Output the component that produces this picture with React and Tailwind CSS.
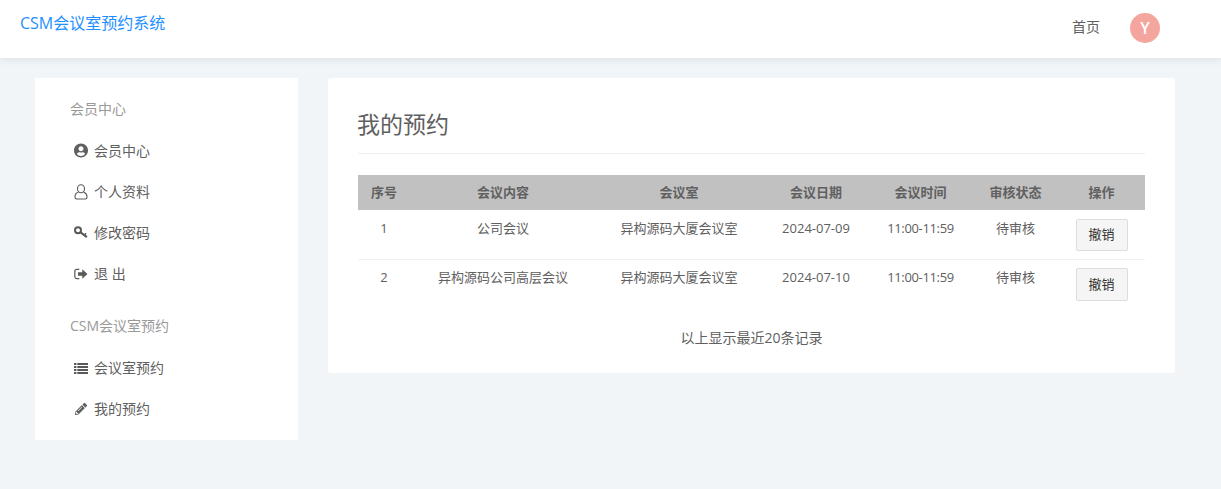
import React from "react";
import { FaUserCircle, FaPencilAlt } from "react-icons/fa";

const font = "font-['Open_Sans','Noto_Sans_CJK_SC',sans-serif]";

function LogoutIcon() {
  return (
    <svg viewBox="0 0 16 14" className="w-[14px] h-[12px] text-[#595959]" fill="currentColor">
      <path d="M6 1.500H3A2.200 2.200 0 0 0 .8 3.700v6.600A2.200 2.200 0 0 0 3 12.500h3" fill="none" stroke="currentColor" strokeWidth="1.400" />
      <path d="M4.500 5h5V1.600L15.500 7l-6 5.400V9h-5z" />
    </svg>
  );
}

function KeyIcon() {
  return (
    <svg viewBox="0 0 14 14" className="w-[15px] h-[15px] text-[#595959]" fill="none" stroke="currentColor">
      <circle cx="4" cy="4.800" r="3" strokeWidth="2" />
      <path d="M6.300 6.600l6.600 5" strokeWidth="2" />
      <path d="M10.300 9.700l1.700-1.900" strokeWidth="1.600" />
    </svg>
  );
}

function UserOutlineIcon() {
  return (
    <svg viewBox="0 0 14 16" className="w-[14px] h-[16px] text-[#595959]" fill="none" stroke="currentColor" strokeWidth="1.100">
      <ellipse cx="7" cy="4.700" rx="3.500" ry="4" />
      <path d="M4.300 8.300C2.300 9 1 10.500 1 12.500V13.300Q1 15 2.800 15H11.200Q13 15 13 13.300V12.500C13 10.500 11.700 9 9.700 8.300" />
    </svg>
  );
}

function ListIcon() {
  return (
    <svg viewBox="0 0 14 12" className="w-[14px] h-[12px] text-[#595959]" fill="currentColor">
      <rect x="0" y="1" width="2.400" height="2" />
      <rect x="3.300" y="1" width="10.700" height="2" />
      <rect x="0" y="4" width="2.400" height="2" />
      <rect x="3.300" y="4" width="10.700" height="2" />
      <rect x="0" y="7" width="2.400" height="2" />
      <rect x="3.300" y="7" width="10.700" height="2" />
      <rect x="0" y="10" width="2.400" height="2" />
      <rect x="3.300" y="10" width="10.700" height="2" />
    </svg>
  );
}

function SideItem({ icon, children }) {
  return (
    <a className="flex items-center h-[41px] pl-[39px] text-[14px] text-[#606060] gap-[6px]">
      <span className="w-[14px] flex items-center justify-center shrink-0">{icon}</span>
      <span>{children}</span>
    </a>
  );
}

const rows = [
  ["1", "公司会议", "异构源码大厦会议室", "2024-07-09", "11:00-11:59", "待审核"],
  ["2", "异构源码公司高层会议", "异构源码大厦会议室", "2024-07-10", "11:00-11:59", "待审核"],
];

const headers = [
  ["序号", "w-[52px]"],
  ["会议内容", "w-[186px]"],
  ["会议室", "w-[166px]"],
  ["会议日期", "w-[108px]"],
  ["会议时间", "w-[101px]"],
  ["审核状态", "w-[89px]"],
  ["操作", "w-[85px] pr-[2px]"],
];

export default function App() {
  return (
    <div className={`${font} min-h-[489px] bg-[#f2f5f8] text-[#606060]`}>
      <header className="h-[58px] bg-white shadow-[0_2px_8px_rgba(0,0,0,0.08)] flex justify-between">
        <a className="pl-5 pt-[12px] text-[16px] leading-[22px] text-[#1e90ff]">CSM会议室预约系统</a>
        <div className="flex items-center pr-[61px] pb-[2px]">
          <a className="text-[14px] text-[#606060] mb-[4px]">首页</a>
          <span className="ml-[30px] w-[30px] h-[30px] rounded-full bg-[#f4a69e] text-white text-[16px] font-semibold flex items-center justify-center">Y</span>
        </div>
      </header>

      <div className="flex items-start pt-5 pl-[35px] gap-[30px]">
        <aside className="w-[263px] h-[362px] bg-white pt-[11px]">
          <div className="h-[39px] mb-[2px] pl-[35px] flex items-center text-[14px] text-[#999999]">会员中心</div>
          <SideItem icon={<FaUserCircle className="w-[15px] h-[15px]" />}>会员中心</SideItem>
          <SideItem icon={<UserOutlineIcon />}>个人资料</SideItem>
          <SideItem icon={<KeyIcon />}>修改密码</SideItem>
          <SideItem icon={<LogoutIcon />}>退 出</SideItem>
          <div className="h-[39px] mt-[12px] mb-[2px] pl-[35px] flex items-center text-[14px] text-[#999999]">CSM会议室预约</div>
          <SideItem icon={<ListIcon />}>会议室预约</SideItem>
          <SideItem icon={<FaPencilAlt className="w-[12px] h-[12px]" />}>我的预约</SideItem>
        </aside>

        <main className="w-[847px] h-[295px] bg-white rounded-[3px] px-[30px]">
          <h1 className="h-[76px] pt-[29px] text-[23px] leading-[34px] border-b border-[#eeeeee] text-[#606060] font-normal -indent-px">我的预约</h1>
          <table className="mt-[21px] w-[787px] table-fixed border-collapse text-[13px]">
            <thead>
              <tr className="h-[35px] bg-[#c1c1c1]">
                {headers.map(([h, w]) => (
                  <th key={h} className={`${w} font-bold text-[#606060] text-center`}>{h}</th>
                ))}
              </tr>
            </thead>
            <tbody>
              {rows.map((r, ri) => (
                <tr key={r[0]} className="h-[49px] border-b border-[#f1f1f1] last:border-b-0">
                  {r.map((c, i) => (
                    <td key={i} className={`text-center align-top leading-[19px] text-[#606060] ${ri === 0 ? "pt-[9px]" : "pt-[8px]"} ${i === 4 ? "tracking-[-0.35px]" : ""}`}>{c}</td>
                  ))}
                  <td className="text-center align-top pt-[8.500px] pr-[2px]">
                    <button className={`w-[52px] rounded-[2px] border border-[#dddddd] bg-[#f5f5f5] text-[#333333] text-[13px] ${ri === 0 ? "h-[32px]" : "h-[33px]"}`}>撤销</button>
                  </td>
                </tr>
              ))}
            </tbody>
          </table>
          <p className="mt-[20px] text-center text-[14px] leading-[20px] text-[#606060]">以上显示最近20条记录</p>
        </main>
      </div>
    </div>
  );
}
